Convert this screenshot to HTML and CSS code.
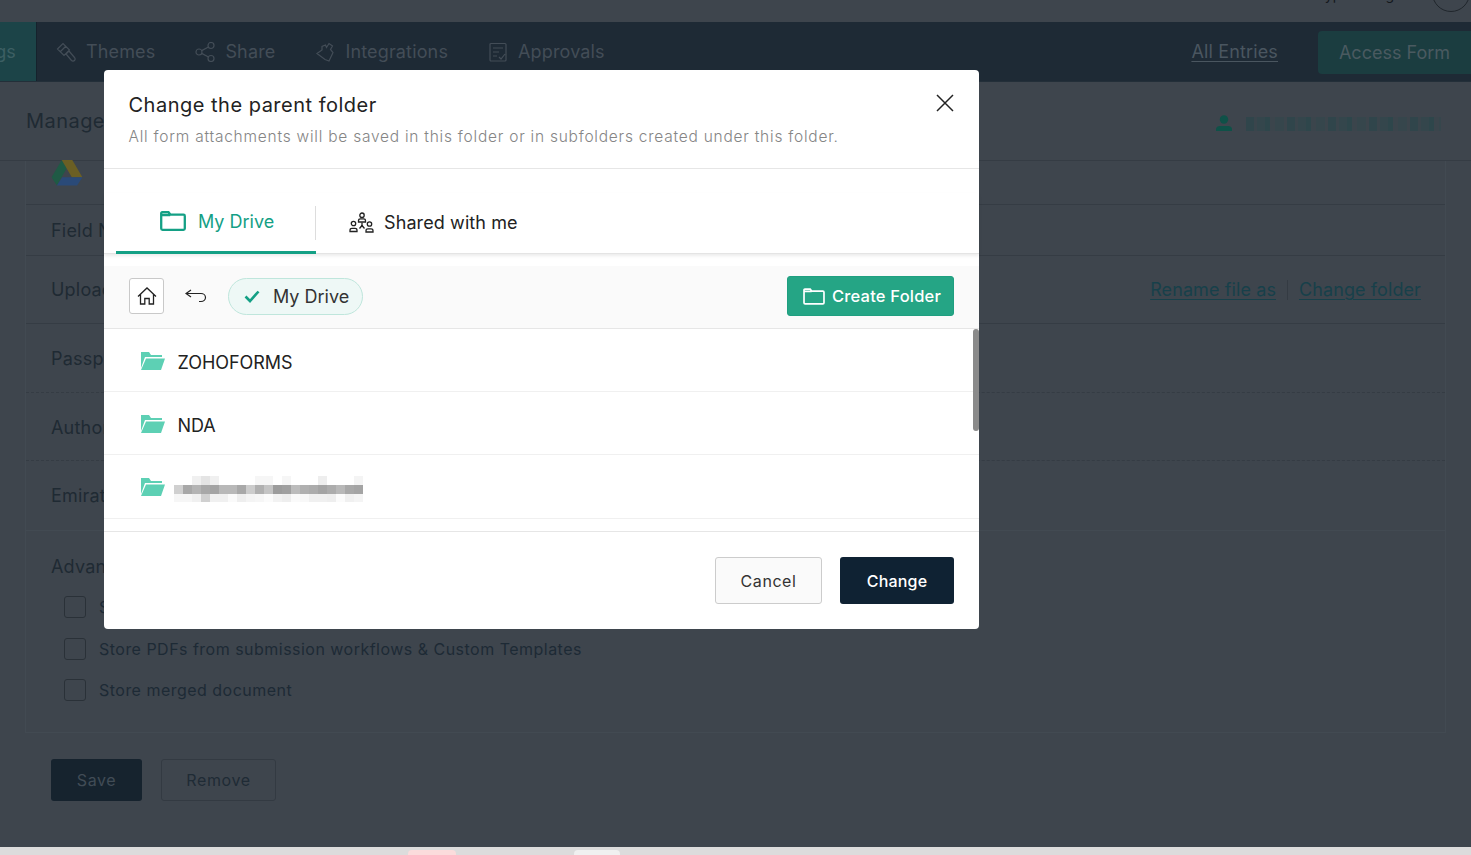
FILE: index.html
```html
<!DOCTYPE html>
<html lang="en">
<head>
<meta charset="utf-8">
<title>Change the parent folder</title>
<link rel="stylesheet" href="styles.css">
</head>
<body>
<div class="app">
  <div class="topbar"><span class="top-text">Typesetting</span><span class="avatar"></span></div>
  <nav class="nav">
    <div class="nav-active"><span>Settings</span></div>
    <div class="nav-item">
      <svg class="nav-icon" viewBox="0 0 20 20"><path d="M1.500 7 7 1.500l6.500 6.500L8 13.500zM4.500 9.500 10 4M10 12l3-3 5.500 6.500a2 2 0 0 1-3 3z"/></svg>Themes</div>
    <div class="nav-item">
      <svg class="nav-icon" viewBox="0 0 20 20"><circle cx="4" cy="10" r="3"/><circle cx="16" cy="3.500" r="3"/><circle cx="16" cy="16.500" r="3"/><path d="M6.700 8.600 13.400 5M6.700 11.400l6.700 3.600"/></svg>Share</div>
    <div class="nav-item">
      <svg class="nav-icon" viewBox="0 0 20 20"><path d="M2 11.500 7 8V4.500L10.500 3l1 2.500L14 1.500l3.500 2.500-2 3.500 2.500 3-4 8.500-4-1.500z"/></svg>Integrations</div>
    <div class="nav-item">
      <svg class="nav-icon" viewBox="0 0 20 20"><path d="M3 1.500h14a1 1 0 0 1 1 1V18a1 1 0 0 1-1 1H3a1 1 0 0 1-1-1V2.500a1 1 0 0 1 1-1zM5 6h10M5 10h6M5 14h4M11 15l2 2 4-5"/></svg>Approvals</div>
    <a class="nav-link">All Entries</a>
    <div class="nav-access">Access Form</div>
  </nav>
  <div class="subbar">
    <span class="subbar-title">Manage Google Drive</span>
    <svg class="user-icon" viewBox="0 0 18 18"><circle cx="9" cy="5.500" r="4.200"/><path d="M1 17v-2c0-2 2-3 4-3h8c2 0 4 1 4 3v2z"/></svg>
    <span class="mosaic-email"></span>
  </div>
  <main class="main">
    <section class="panel">
      <div class="row row-drive">
        <svg class="drive" viewBox="0 0 32 27"><path fill="#1f5a45" d="M10.500 0 0 18l5.500 8.500L16 8z"/><path fill="#6b5f24" d="M10.500 0h11L32 18H21z"/><path fill="#2a4a78" d="M11 18h21l-5.500 8.500H5.500z"/></svg>
      </div>
      <div class="row row-field"><span class="label">Field Name</span></div>
      <div class="row row-upload"><span class="label">Upload folder</span>
        <span class="links"><a class="link">Rename file as</a><i class="link-sep"></i><a class="link">Change folder</a></span></div>
      <div class="row row-pass"><span class="label">Passport</span></div>
      <div class="row row-auth"><span class="label">Authorization</span></div>
      <div class="row row-emirates"><span class="label">Emirates ID</span></div>
    </section>
    <section class="advanced">
      <div class="adv-title">Advanced</div>
      <label class="check check-first"><i class="box"></i>Store form submission PDFs</label>
      <label class="check check-second"><i class="box"></i>Store PDFs from submission workflows &amp; Custom Templates</label>
      <label class="check check-third"><i class="box"></i>Store merged document</label>
    </section>
    <div class="actions"><span class="btn-save">Save</span><span class="btn-remove">Remove</span></div>
  </main>
  <div class="taskbar"><i class="task task-pink"></i><i class="task task-white"></i></div>
</div>

<div class="modal">
  <header class="modal-head">
    <h1 class="modal-title">Change the parent folder</h1>
    <p class="modal-sub">All form attachments will be saved in this folder or in subfolders created under this folder.</p>
    <svg class="close" viewBox="0 0 18 18"><path d="M1 1l16 16M17 1 1 17"/></svg>
  </header>
  <div class="tabs">
    <div class="tab tab-on">
      <svg class="folder-line" viewBox="0 0 26 20"><path d="M1.200 17.500V2.200c0-.6.400-1 1-1h6.300l2 2.500h13c.6 0 1.300.5 1.300 1.300v12.500c0 .8-.7 1.300-1.300 1.300H2.500c-.8 0-1.300-.5-1.300-1.300zM1.200 4h9"/></svg>
      My Drive</div>
    <div class="tab tab-off">
      <svg class="people" viewBox="0 0 26 21"><circle cx="13" cy="3.200" r="2.200"/><path d="M9.500 10V8.700c0-1 1-1.800 2-1.800h3c1 0 2 .8 2 1.800V10z"/><circle cx="4.500" cy="11.500" r="2.200"/><path d="M1 19.500v-1.300c0-1 1-1.800 2-1.800h3c1 0 2 .8 2 1.800v1.300z"/><circle cx="20.500" cy="12" r="2.200"/><path d="M17 20v-1.300c0-1 1-1.800 2-1.800h3c1 0 2 .8 2 1.800V20z"/><path d="M13 10.500v3M13 13.500l-2.500 3M13 13.500l2.500 3"/></svg>
      Shared with me</div>
  </div>
  <div class="toolbar">
    <span class="home-btn"><svg class="home" viewBox="0 0 20 18"><path d="M1 9.500 10 1l9 8.500M3.500 7.500V17h4.300v-5.500h4.400V17h4.300V7.500"/></svg></span>
    <svg class="back" viewBox="0 0 22 14"><path d="M6 1 1 4.500 6 8M1 4.500h15c2.500 0 4.500 1.800 4.500 4s-2 4-4.500 4h-2"/></svg>
    <span class="crumb"><svg class="tick" viewBox="0 0 16 13"><path d="M1.500 6.500 6 11l8.500-9.500"/></svg>My Drive</span>
    <span class="create"><svg class="folder-white" viewBox="0 0 26 20"><path d="M1.200 17.500V2.200c0-.6.400-1 1-1h6.300l2 2.500h13c.6 0 1.300.5 1.300 1.300v12.500c0 .8-.7 1.300-1.300 1.300H2.500c-.8 0-1.300-.5-1.300-1.300zM1.200 4h9"/></svg>Create Folder</span>
  </div>
  <div class="list">
    <div class="item">
      <svg class="folder-open" viewBox="0 0 24 20"><path d="M0 19V1h8l2 3h11v2H4L0 17z"/><path d="M5 7.500h19L20 19H0z"/></svg>
      ZOHOFORMS</div>
    <div class="item">
      <svg class="folder-open" viewBox="0 0 24 20"><path d="M0 19V1h8l2 3h11v2H4L0 17z"/><path d="M5 7.500h19L20 19H0z"/></svg>
      NDA</div>
    <div class="item item-last">
      <svg class="folder-open" viewBox="0 0 24 20"><path d="M0 19V1h8l2 3h11v2H4L0 17z"/><path d="M5 7.500h19L20 19H0z"/></svg>
      <span class="mosaic-name"></span></div>
    <span class="scroll"></span>
  </div>
  <footer class="modal-foot">
    <span class="btn-cancel">Cancel</span>
    <span class="btn-change">Change</span>
  </footer>
</div>
</body>
</html>
```
FILE: styles.css
```css
* { box-sizing: border-box; }
html, body { margin: 0; height: 100%; overflow: hidden; }
body { font-family: Inter, "Liberation Sans", sans-serif; background: #3e454d; color: #1f2a33; }
svg { display: block; flex: none; }

.app { width: 1471px; height: 855px; display: flex; flex-direction: column; background: #3e454d; }

.topbar { height: 22px; flex: none; display: flex; justify-content: flex-end; overflow: hidden; }
.top-text { font-size: 14px; line-height: 14px; margin: -12px 38px 0 0; color: #14181c; }
.avatar { width: 38px; height: 38px; border-radius: 50%; border: 1px solid #20262c; margin: -26px 1px 0 0; }

.nav { height: 60px; flex: none; display: flex; align-items: center; background: #1e2a35; border-bottom: 1px solid #232f39; color: #434d57; font-size: 18px; letter-spacing: .15px; }
.nav-active { width: 37px; height: 100%; flex: none; background: #1c4448; border-right: 1px solid #15222c; display: flex; justify-content: flex-end; align-items: center; overflow: hidden; margin-right: 19px; color: #3c5f63; }
.nav-active span { white-space: nowrap; padding-right: 20px; }
.nav-item { display: flex; align-items: center; gap: 10px; margin-right: 40px; }
.nav-icon { width: 20px; height: 20px; fill: none; stroke: #434d57; stroke-width: 1.200; }
.nav-link { margin-left: auto; color: #4a5660; text-decoration: underline; text-underline-offset: 3px; }
.nav-access { width: 153px; height: 43px; margin: 1px 0 0 40px; display: flex; align-items: center; justify-content: center; letter-spacing: 0; background: #1b3d40; color: #4a5a60; border-radius: 4px 0 0 4px; }

.subbar { height: 79px; flex: none; display: flex; align-items: center; padding: 0 30px 0 26px; border-bottom: 1px solid #353c44; }
.subbar-title { font-size: 20px; letter-spacing: .45px; white-space: nowrap; }
.user-icon { width: 18px; height: 18px; margin: 4px 0 0 auto; fill: #0f5148; }
.mosaic-email { width: 195px; height: 14px; margin: 5px 0 0 13px; background:
  repeating-linear-gradient(90deg, #30454b 0 8px, #3a454c 8px 11px, #34464c 11px 19px, #2e464b 19px 24px, #3b454c 24px 29px, #36464c 29px 38px, #3c454c 38px 41px); }

.main { flex: 1; min-height: 0; display: flex; flex-direction: column; }
.panel { margin: 0 25px; border: solid #424a52; border-width: 0 1px; }
.row { display: flex; align-items: center; padding-left: 25px; border-bottom: 1px solid #353c44; }
.label { font-size: 18px; letter-spacing: .2px; white-space: nowrap; }
.row-drive { height: 44px; align-items: flex-start; }
.row-field { height: 51px; }
.row-upload { height: 68px; }
.row-pass { height: 69px; border-bottom: 1px dashed #353c44; }
.row-auth { height: 68px; padding-top: 2px; border-bottom: 1px dashed #353c44; }
.row-emirates { height: 69px; padding-bottom: 1px; border-bottom: 0; }
.drive { width: 32px; height: 26px; margin-top: -1px; }
.links { margin-left: auto; margin-right: 24px; display: flex; align-items: center; font-size: 18px; letter-spacing: .1px; color: #17404a; }
.link { text-decoration: underline; text-underline-offset: 3px; }
.link-sep { width: 1px; height: 20px; margin: 0 11px; background: #343b43; }

.advanced { height: 203px; margin: 0 25px; padding: 24px 0 0 25px; border: 1px solid #424a52; }
.adv-title { font-size: 18px; line-height: 24px; letter-spacing: .2px; }
.check { display: flex; align-items: center; gap: 13px; margin-left: 13px; height: 22px; font-size: 16px; letter-spacing: .48px; color: #1d2a35; white-space: nowrap; }
.check-first { margin-top: 17px; }
.check-second { margin-top: 20px; }
.check-third { margin-top: 19px; }
.box { width: 22px; height: 22px; flex: none; border: 1px solid #2a3138; border-radius: 3px; }

.actions { display: flex; gap: 19px; padding: 26px 0 0 51px; font-size: 16px; letter-spacing: .6px; }
.btn-save { width: 91px; height: 42px; display: flex; align-items: center; justify-content: center; background: #16232e; color: #414c56; border-radius: 3px; }
.btn-remove { width: 115px; height: 42px; display: flex; align-items: center; justify-content: center; border: 1px solid #333a42; color: #1f2b35; border-radius: 3px; }

.taskbar { height: 8px; flex: none; display: flex; background: #dcdcdc; padding: 3px 0 0 408px; }
.task { height: 5px; display: block; border-radius: 4px 4px 0 0; }
.task-pink { width: 48px; background: #fbdcdc; }
.task-white { width: 46px; margin-left: 118px; background: #f0f0f0; }

.modal { position: absolute; left: 104px; top: 70px; width: 875px; height: 559px; display: flex; flex-direction: column; background: #fff; border-radius: 4px; color: #222; }
.modal-head { position: relative; height: 99px; flex: none; padding: 23px 25px 0 24.500px; border-bottom: 1px solid #e6e6e6; }
.modal-title { margin: 0; font-size: 20px; line-height: 24px; font-weight: 400; letter-spacing: .5px; color: #222; }
.modal-sub { margin: 10px 0 0; font-size: 15.500px; line-height: 20px; font-weight: 300; letter-spacing: .76px; color: #858585; white-space: nowrap; }
.close { position: absolute; right: 25px; top: 24px; width: 18px; height: 18px; fill: none; stroke: #222; stroke-width: 1.500; }

.tabs { height: 61px; margin-top: 24px; flex: none; display: flex; padding-left: 12px; border-bottom: 1px solid #e4e4e4; box-shadow: 0 2px 3px rgba(0,0,0,.08); font-size: 18px; }
.tab { display: flex; align-items: center; }
.tab-on { width: 200px; height: 61px; padding: 0 0 1px 44px; gap: 12px; letter-spacing: 0; color: #14a085; border-bottom: 3px solid #14a085; }
.tab-off { position: relative; padding: 0 0 1px 33px; gap: 9px; letter-spacing: .1px; color: #222; }
.tab-off::before { content: ""; position: absolute; left: -1px; top: 13px; width: 1px; height: 34px; background: #ddd; }
.folder-line { width: 26px; height: 20px; margin-top: -2px; fill: none; stroke: #14a085; stroke-width: 2.300; }
.people { width: 26px; height: 21px; fill: none; stroke: #222; stroke-width: 1.300; }

.toolbar { height: 63px; margin-top: 12px; flex: none; display: flex; align-items: center; padding: 0 25px 2px; background: #fafafa; border-bottom: 1px solid #e6e6e6; }
.home-btn { width: 35px; height: 36px; display: flex; align-items: center; justify-content: center; border: 1px solid #c9c9c9; border-radius: 3px; background: #fff; }
.home { width: 20px; height: 18px; fill: none; stroke: #222; stroke-width: 1.300; }
.back { width: 22px; height: 14px; margin-left: 21px; fill: none; stroke: #222; stroke-width: 1.200; }
.crumb { height: 37px; margin-left: 21px; padding: 0 13px 0 15px; display: flex; align-items: center; gap: 13px; font-size: 18px; background: #eef8f6; border: 1px solid #bfe6dc; border-radius: 19px; color: #333; }
.tick { width: 16px; height: 13px; fill: none; stroke: #14a085; stroke-width: 2.600; }
.create { width: 167px; height: 40px; margin-left: auto; display: flex; align-items: center; padding-left: 15px; gap: 7px; font-size: 16.500px; font-weight: 500; letter-spacing: .2px; color: #fff; background: #25a585; border: 1px solid #1f9f80; border-radius: 3px; }
.folder-white { width: 22px; height: 17px; fill: none; stroke: #fff; stroke-width: 2; }

.list { position: relative; height: 203px; flex: none; border-bottom: 1px solid #e6e6e6; }
.item { height: 63px; display: flex; align-items: center; gap: 12.500px; padding: 4px 0 0 37px; font-size: 18px; letter-spacing: -.05px; color: #222; border-bottom: 1px solid #f0f0f0; }
.item-last { height: 64px; gap: 9px; }
.folder-open { width: 24px; height: 20px; fill: #5dd0b4; margin-top: -3px; }
.mosaic-name { width: 189px; height: 26px; background:
  linear-gradient(90deg, #fff 0 18px, #f0f0f0 18px 27px, #e4e4e4 27px 36px, #f0f0f0 36px 45px, #fff 45px 81px, #f6f6f6 81px 99px, #fff 99px 108px, #f6f6f6 108px 117px, #fff 117px 144px, #eee 144px 153px, #fff 153px 180px, #f4f4f4 180px 189px) 0 0 / 100% 9px no-repeat,
  linear-gradient(90deg, #d0d0d0 0 9px, #a8a8a8 9px 18px, #b4b4b4 18px 27px, #a8a8a8 27px 36px, #a4a4a4 36px 45px, #b8b8b8 45px 63px, #a8a8a8 63px 72px, #ccc 72px 81px, #b0b0b0 81px 90px, #c4c4c4 90px 99px, #9c9c9c 99px 108px, #a0a0a0 108px 117px, #bcbcbc 117px 126px, #b0b0b0 126px 135px, #acacac 135px 144px, #a4a4a4 144px 153px, #acacac 153px 162px, #b8b8b8 162px 171px, #a8a8a8 171px 180px, #a4a4a4 180px 189px) 0 9px / 100% 9px no-repeat,
  linear-gradient(90deg, #f6f6f6 0 18px, #f0f0f0 18px 27px, #d0d0d0 27px 36px, #f0f0f0 36px 54px, #fafafa 54px 63px, #eee 63px 72px, #f4f4f4 72px 81px, #f6f6f6 81px 90px, #fbfbfb 90px 99px, #f2f2f2 99px 108px, #eee 108px 117px, #fafafa 117px 126px, #f8f8f8 126px 135px, #f0f0f0 135px 153px, #eee 153px 162px, #fbfbfb 162px 171px, #f0f0f0 171px 180px, #f4f4f4 180px 189px) 0 18px / 100% 8px no-repeat; }
.scroll { position: absolute; right: 0; top: 0; width: 6px; height: 102px; border-radius: 3px; background: #8a8a8a; }

.modal-foot { flex: 1; display: flex; justify-content: flex-end; gap: 18px; padding: 25px 25px 0 0; }
.btn-cancel { width: 107px; height: 47px; display: flex; align-items: center; justify-content: center; font-size: 16px; letter-spacing: .55px; color: #333; background: #fafafa; border: 1px solid #ccc; border-radius: 3px; }
.btn-change { width: 114px; height: 47px; display: flex; align-items: center; justify-content: center; font-size: 16px; font-weight: 500; letter-spacing: .2px; color: #fff; background: #0f2233; border-radius: 3px; }
```
